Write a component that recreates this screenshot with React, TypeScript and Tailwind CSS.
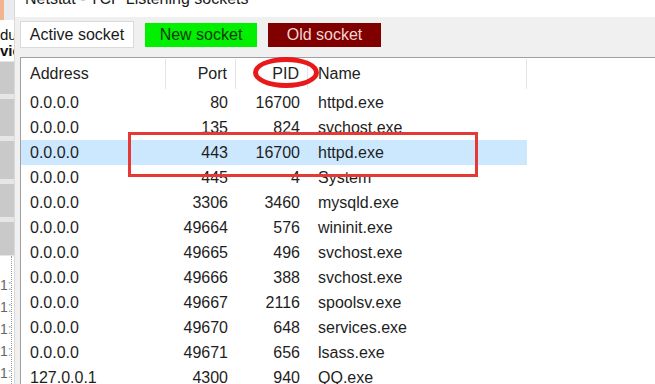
import React from 'react';

const rows = [
  { addr: '0.0.0.0', port: '80', pid: '16700', name: 'httpd.exe' },
  { addr: '0.0.0.0', port: '135', pid: '824', name: 'svchost.exe' },
  { addr: '0.0.0.0', port: '443', pid: '16700', name: 'httpd.exe', selected: true },
  { addr: '0.0.0.0', port: '445', pid: '4', name: 'System' },
  { addr: '0.0.0.0', port: '3306', pid: '3460', name: 'mysqld.exe' },
  { addr: '0.0.0.0', port: '49664', pid: '576', name: 'wininit.exe' },
  { addr: '0.0.0.0', port: '49665', pid: '496', name: 'svchost.exe' },
  { addr: '0.0.0.0', port: '49666', pid: '388', name: 'svchost.exe' },
  { addr: '0.0.0.0', port: '49667', pid: '2116', name: 'spoolsv.exe' },
  { addr: '0.0.0.0', port: '49670', pid: '648', name: 'services.exe' },
  { addr: '0.0.0.0', port: '49671', pid: '656', name: 'lsass.exe' },
  { addr: '127.0.0.1', port: '4300', pid: '940', name: 'QQ.exe' },
];

function LeftStrip() {
  return (
    <div className="w-[15px] shrink-0 flex flex-col overflow-hidden border-r border-[#d9d9d9]">
      <div className="h-[20px] flex">
        <div className="w-[4px] bg-[#f2b48e]" />
        <div className="flex-1 bg-[#e9ebee]" />
      </div>
      <div className="h-[42px] bg-white pt-[7px] text-[15px] leading-[16px] text-[#111] whitespace-nowrap">
        <div>du</div>
        <div className="font-bold">vic</div>
      </div>
      <div className="h-[196px] flex flex-col gap-[5px] bg-[#e6e6e6] py-[1px]">
        <div className="h-[32px] bg-[#c9c9c9]" />
        <div className="h-[37px] bg-[#c9c9c9]" />
        <div className="h-[38px] bg-[#c9c9c9]" />
        <div className="h-[33px] bg-[#c9c9c9]" />
        <div className="h-[33px] bg-[#c9c9c9]" />
      </div>
      <div className="flex-1 bg-white flex flex-col pt-[18px] border-r border-dotted border-[#9a9a9a] mr-[2px]">
        {[0, 1, 2, 3, 4].map((i) => (
          <div key={i} className="h-[22px] flex items-center text-[14px] text-[#666]">
            1<span className="text-[#aaa]">:</span>
          </div>
        ))}
      </div>
    </div>
  );
}

export default function App() {
  return (
    <div className="relative w-[655px] h-[384px] overflow-hidden flex bg-white font-['Liberation_Sans',Arial,sans-serif]">
      <LeftStrip />

      <div className="flex-1 flex flex-col min-w-0">
        {/* Title bar, cut at the top */}
        <div className="h-[17px] bg-white overflow-hidden pl-[10px]">
          <div className="-mt-[10px] text-[16px] leading-[18px] text-[#1a1a1a] whitespace-nowrap">
            Netstat - TCP Listening sockets
          </div>
        </div>

        <div className="flex-1 flex flex-col bg-[#f0f0f0] pl-[5px] min-h-0">
          {/* Toggle buttons */}
          <div className="flex items-center gap-[11px] pt-[4px] text-[16px]">
            <div className="w-[114px] h-[27px] flex items-center justify-center bg-white border border-[#dadada] text-[#1a1a1a]">
              Active socket
            </div>
            <div className="w-[112px] h-[24px] flex items-center justify-center bg-[#00f000] text-[#0d3a0d]">
              New socket
            </div>
            <div className="w-[113px] h-[24px] flex items-center justify-center bg-[#800000] text-[#f4d6d6]">
              Old socket
            </div>
          </div>

          {/* List view */}
          <div className="mt-[9px] flex-1 bg-white border-t border-l border-[#a0a0a0] text-[16px] text-[#1e1e1e]">
            <div className="h-[32px] flex items-center text-[#222]">
              <div className="w-[145px] h-[30px] flex items-center pl-[9px] border-r border-[#e5e5e5]">Address</div>
              <div className="w-[70px] h-[30px] flex items-center justify-end pr-[8px] border-r border-[#e5e5e5]">Port</div>
              <div className="w-[72px] h-[30px] flex items-center justify-end pr-[8px] border-r border-[#e5e5e5]">PID</div>
              <div className="w-[219px] h-[30px] flex items-center pl-[10px] border-r border-[#e5e5e5]">Name</div>
            </div>
            {rows.map((r, i) => (
              <div
                key={i}
                className={`w-[506px] h-[25px] flex items-center ${r.selected ? 'bg-[#cce8ff]' : ''}`}
              >
                <div className="w-[145px] pl-[9px]">{r.addr}</div>
                <div className="w-[70px] text-right pr-[8px]">{r.port}</div>
                <div className="w-[72px] text-right pr-[8px]">{r.pid}</div>
                <div className="w-[219px] pl-[10px]">{r.name}</div>
              </div>
            ))}
          </div>
        </div>
      </div>

      {/* Red annotations */}
      <div className="absolute left-[128px] top-[132px] w-[350px] h-[45px] border-[3px] border-[#e53935]" />
      <div className="absolute left-[253px] top-[57px] w-[66px] h-[31px] rounded-[50%] border-[5px] border-[#e8191b]" />
    </div>
  );
}
